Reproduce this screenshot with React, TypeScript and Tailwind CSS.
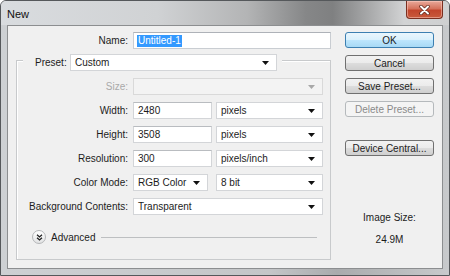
import type { ReactNode } from "react";

function Caret({ muted }: { muted?: boolean }) {
  return (
    <svg width="7" height="4" viewBox="0 0 7 4" className="shrink-0">
      <path d="M0 0h7L3.5 4z" fill={muted ? "#a8a8a8" : "#111"} />
    </svg>
  );
}

function Combo({ value, className, disabled }: { value?: string; className: string; disabled?: boolean }) {
  return (
    <div
      className={`flex h-[17px] items-center justify-between border pl-[4px] pr-[7px] ${
        disabled ? "border-[#d9d9d9] bg-[#f3f3f3]" : "border-[#d3d5d8] bg-white"
      } ${className}`}
    >
      <span>{value}</span>
      <Caret muted={disabled} />
    </div>
  );
}

function Field({ value, className }: { value: string; className: string }) {
  return (
    <div className={`flex h-[17px] items-center border border-[#d3d5d8] border-t-[#b9bcc0] bg-white pl-[4px] ${className}`}>
      {value}
    </div>
  );
}

function Row({ label, muted, children }: { label: string; muted?: boolean; children: ReactNode }) {
  return (
    <div className="flex h-[17px] items-center">
      <div className={`w-[116px] pr-[5px] text-right ${muted ? "text-[#a9a9a9]" : ""}`}>{label}</div>
      {children}
    </div>
  );
}

function Btn({ children, kind }: { children: ReactNode; kind?: "default" | "disabled" }) {
  const look =
    kind === "default"
      ? "border-[#3c7fb1] bg-[linear-gradient(#eaf6fd,#d9f0fc_50%,#bee6fd_50%,#a7d9f5)]"
      : kind === "disabled"
      ? "border-[#b5b9bc] bg-[#f4f4f4] text-[#8a8a8a]"
      : "border-[#707070] bg-[linear-gradient(#f2f2f2,#ebebeb_50%,#dddddd_50%,#cfcfcf)]";
  return (
    <div className={`flex h-[16px] w-[89px] items-center justify-center rounded-[3px] border ${look}`}>
      {children}
    </div>
  );
}

export default function App() {
  return (
    <div className="h-[276px] w-[450px] overflow-hidden rounded-t-[6px] border border-[#55585b] bg-[linear-gradient(to_right,#cdd0d3,#c4c6c8_60%,#a9abad_75%,#c8cacc)] font-['Liberation_Sans',Arial,sans-serif] text-[10px] text-[#1c1c1c]">
      {/* title bar */}
      <div className="flex h-[24px] items-start justify-between bg-[linear-gradient(to_right,#d9dcdf_0%,#d0d2d4_35%,#b3b4b5_55%,#868788_68%,#7f8081_74%,#a7a8a9_82%,#d2d3d4_90%,#cfd0d1_100%)]">
        <span className="pl-[6px] pt-[5px] text-[11px] text-[#101010]">New</span>
        <div className="mr-[6px] flex h-[18px] w-[37px] items-center justify-center rounded-b-[4px] border border-t-0 border-[#7a2f20] bg-[linear-gradient(#e9a99a,#d5725c_45%,#c2452c_55%,#c85a3c)] shadow-[inset_0_0_0_1px_rgba(255,210,200,0.5)]">
          <svg width="11" height="10" viewBox="0 0 11 10">
            <path d="M2 1.5l7 7M9 1.5l-7 7" stroke="#5a2418" strokeWidth="3.4" strokeLinecap="round" />
            <path d="M2 1.5l7 7M9 1.5l-7 7" stroke="#fff" strokeWidth="2" strokeLinecap="round" />
          </svg>
        </div>
      </div>

      {/* client area */}
      <div className="mx-[6px] flex h-[244px] border border-[#8c8e90] bg-[#f0f0f0]">
        {/* left column */}
        <div className="w-[337px] pt-[6px]">
          <div className="flex h-[17px] items-center">
            <div className="w-[125px] pr-[5px] text-right">Name:</div>
            <div className="flex h-[17px] w-[198px] items-center border border-[#c9cdd2] border-t-[#aeb2b8] bg-white pl-[3px]">
              <span className="bg-[#3399ff] px-[1px] leading-[12px] text-white">Untitled-1</span>
            </div>
          </div>

          {/* group box */}
          <div className="ml-[8px] mt-[11px] h-[200px] w-[315px] border border-[#c8cacc] shadow-[inset_1px_1px_0_#fff]">
            <div className="-mt-[7px] ml-[6px] flex w-fit items-center bg-[#f0f0f0] pl-[12px] pr-[5px]">
              <div className="w-[35px]">Preset:</div>
              <Combo value="Custom" className="w-[207px]" />
            </div>

            <div className="mt-[7px] flex flex-col gap-[7px]">
              <Row label="Size:" muted>
                <Combo className="w-[190px]" disabled />
              </Row>
              <Row label="Width:">
                <Field value="2480" className="w-[79px]" />
                <Combo value="pixels" className="ml-[4px] w-[107px]" />
              </Row>
              <Row label="Height:">
                <Field value="3508" className="w-[79px]" />
                <Combo value="pixels" className="ml-[4px] w-[107px]" />
              </Row>
              <Row label="Resolution:">
                <Field value="300" className="w-[79px]" />
                <Combo value="pixels/inch" className="ml-[4px] w-[107px]" />
              </Row>
              <Row label="Color Mode:">
                <Combo value="RGB Color" className="w-[75px]" />
                <Combo value="8 bit" className="ml-[8px] w-[107px]" />
              </Row>
              <Row label="Background Contents:">
                <Combo value="Transparent" className="w-[190px]" />
              </Row>
            </div>

            <div className="mt-[15px] flex h-[14px] items-center">
              <div className="ml-[15px] flex h-[14px] w-[14px] items-center justify-center rounded-full border border-[#b4b6b8] bg-[linear-gradient(#ffffff,#e2e3e4)]">
                <svg width="7" height="7" viewBox="0 0 7 7">
                  <path d="M1 0.8l2.5 2.2L6 0.8M1 3.8l2.5 2.2L6 3.8" stroke="#222" strokeWidth="1.3" fill="none" />
                </svg>
              </div>
              <span className="ml-[5px]">Advanced</span>
              <div className="ml-[6px] mr-[13px] h-px flex-1 bg-[#bdbfc1]" />
            </div>
          </div>
        </div>

        {/* right column */}
        <div className="flex w-[89px] flex-col pt-[6px]">
          <Btn kind="default">OK</Btn>
          <div className="mt-[7px]">
            <Btn>Cancel</Btn>
          </div>
          <div className="mt-[7px]">
            <Btn>Save Preset...</Btn>
          </div>
          <div className="mt-[7px]">
            <Btn kind="disabled">Delete Preset...</Btn>
          </div>
          <div className="mt-[23px]">
            <Btn>Device Central...</Btn>
          </div>
          <div className="mt-[54px] text-center">Image Size:</div>
          <div className="mt-[7px] text-center">24.9M</div>
        </div>
      </div>
    </div>
  );
}
